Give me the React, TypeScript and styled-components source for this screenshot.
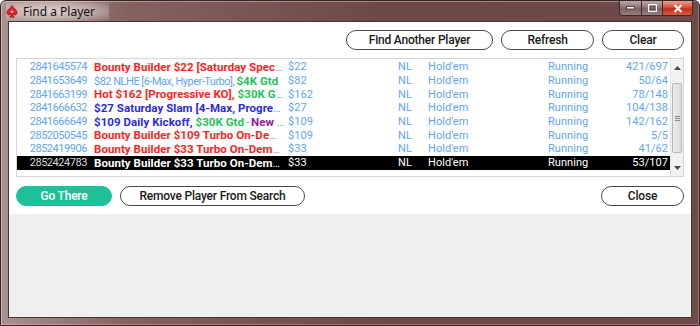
import styled, { createGlobalStyle } from "styled-components";

const GlobalStyle = createGlobalStyle`
  html, body {
    margin: 0;
    padding: 0;
    background: #ffffff;
  }
  * {
    box-sizing: border-box;
  }
`;

const Window = styled.div`
  width: 700px;
  height: 326px;
  display: flex;
  flex-direction: column;
  padding: 0 7px 7px 7px;
  border: 1px solid #3a2423;
  border-radius: 6px 6px 0 0;
  background: linear-gradient(to right, #a89190 0%, #85625f 18%, #6c4846 55%, #6e4a48 100%);
  box-shadow: inset 1px 1px 0 rgba(255, 255, 255, 0.35), inset -1px -1px 0 rgba(255, 255, 255, 0.25);
  font-family: Roboto, "Liberation Sans", sans-serif;
`;

const TitleBar = styled.div`
  height: 20px;
  display: flex;
  align-items: flex-start;
  flex-shrink: 0;
`;

const TitleLabel = styled.div`
  display: flex;
  align-items: center;
  gap: 5px;
  height: 20px;
  margin-left: -2px;
  padding: 0 14px 0 0;
  font-family: "Noto Sans", "Liberation Sans", sans-serif;
  font-size: 12px;
  color: #111;
  background: radial-gradient(ellipse at 45% 50%, rgba(238, 228, 227, 0.8) 0%, rgba(238, 228, 227, 0.45) 55%, rgba(238, 228, 227, 0) 100%);
`;

const WindowControls = styled.div`
  margin-left: auto;
  margin-right: -1px;
  display: flex;
  height: 15px;
  border: 1px solid #3b2a2a;
  border-top: none;
  border-radius: 0 0 4px 4px;
  overflow: hidden;
`;

const ControlButton = styled.div<{ $w: number; $close?: boolean }>`
  width: ${(p) => p.$w}px;
  display: flex;
  align-items: center;
  justify-content: center;
  background: ${(p) =>
    p.$close
      ? "linear-gradient(#e8a18f, #d2533c 45%, #c0321c 55%, #d45a3f)"
      : "linear-gradient(#b9a8a7, #8f7674 45%, #7d6260 55%, #98807e)"};
  & + & {
    border-left: 1px solid #3b2a2a;
  }
`;

const Client = styled.div`
  flex: 1;
  display: flex;
  flex-direction: column;
  background: #efefef;
  border: 1px solid #4a3433;
`;

const Upper = styled.div`
  background: #ffffff;
  padding: 8px 7px 8px 7px;
  display: flex;
  flex-direction: column;
`;

const ButtonRow = styled.div<{ $split?: boolean }>`
  display: flex;
  gap: 8px;
  justify-content: ${(p) => (p.$split ? "flex-start" : "flex-end")};
`;

const PillButton = styled.button<{ $w: number; $primary?: boolean }>`
  width: ${(p) => p.$w}px;
  height: 20px;
  padding: 0;
  border-radius: 10px;
  border: 1px solid ${(p) => (p.$primary ? "#1fbf9a" : "#4a4a4a")};
  background: ${(p) => (p.$primary ? "#1fbf9a" : "#ffffff")};
  color: ${(p) => (p.$primary ? "#ffffff" : "#1a1a1a")};
  font-family: Roboto, "Liberation Sans", sans-serif;
  font-size: 12px;
  font-weight: 500;
  letter-spacing: -0.2px;
`;

const Spacer = styled.div`
  flex: 1;
`;

const ListBox = styled.div`
  margin: 8px 0 9px 0;
  height: 119px;
  border: 1px solid #d6d6d6;
  display: flex;
`;

const Rows = styled.div`
  flex: 1;
  display: flex;
  flex-direction: column;
  padding-top: 1px;
`;

const Row = styled.div<{ $selected?: boolean }>`
  display: grid;
  grid-template-columns: 70px 201px 110px 30px 120px 73px 47px;
  height: 13.7px;
  align-items: center;
  font-size: 11px;
  letter-spacing: 0.05px;
  white-space: nowrap;
  background: ${(p) => (p.$selected ? "#000000" : "transparent")};
  color: ${(p) => (p.$selected ? "#ffffff" : "#62a6f2")};
`;

const IdCell = styled.div<{ $selected?: boolean }>`
  text-align: right;
  letter-spacing: -0.45px;
  color: ${(p) => (p.$selected ? "#d8d8d8" : "#62a6f2")};
`;

const NameCell = styled.div`
  padding: 0 3px 0 7px;
  overflow: hidden;
  text-overflow: ellipsis;
`;

const Cell = styled.div<{ $right?: boolean }>`
  text-align: ${(p) => (p.$right ? "right" : "left")};
`;

const tones = {
  red: "#ff2424",
  green: "#22c45a",
  blue: "#2a2ae6",
  purple: "#8c20a0",
  light: "#62a6f2",
  grey: "#9a9a9a",
};

type Tone = keyof typeof tones;

const isPlain = (t: Tone) => t === "light" || t === "grey";

const Part = styled.span<{ $tone: Tone; $selected?: boolean }>`
  color: ${(p) => (p.$selected ? "#ffffff" : tones[p.$tone])};
  font-weight: ${(p) => (isPlain(p.$tone) ? 400 : 700)};
  font-size: ${(p) => (isPlain(p.$tone) ? "11px" : "11.5px")};
  letter-spacing: ${(p) => (isPlain(p.$tone) ? "-0.5px" : "0.05px")};
`;

const ScrollBar = styled.div`
  width: 13px;
  display: flex;
  flex-direction: column;
  background: #f2f2f2;
  border-left: 1px solid #e6e6e6;
`;

const Arrow = styled.div`
  height: 17px;
  display: flex;
  align-items: center;
  justify-content: center;
`;

const Track = styled.div`
  flex: 1;
  display: flex;
  flex-direction: column;
  padding: 7px 1px 0 1px;
`;

const Thumb = styled.div`
  height: 70px;
  border: 1px solid #b8b8b8;
  border-radius: 2px;
  background: linear-gradient(to right, #ececec, #dcdcdc);
  display: flex;
  align-items: center;
  justify-content: center;
`;

const Grip = styled.div`
  width: 5px;
  height: 5px;
  background: repeating-linear-gradient(#8a8a8a 0 1px, transparent 1px 2px);
`;

type RowData = {
  id: string;
  name: [Tone, string][];
  buy: string;
  count: string;
  selected?: boolean;
};

const rows: RowData[] = [
  { id: "2841645574", name: [["red", "Bounty Builder $22 [Saturday Special]"]], buy: "$22", count: "421/697" },
  { id: "2841653649", name: [["light", "$82 NLHE [6-Max, Hyper-Turbo], "], ["green", "$4K Gtd"]], buy: "$82", count: "50/64" },
  { id: "2841663199", name: [["red", "Hot $162 [Progressive KO], "], ["green", "$30K Gtd"]], buy: "$162", count: "78/148" },
  { id: "2841666632", name: [["blue", "$27 Saturday Slam [4-Max, Progressive KO]"]], buy: "$27", count: "104/138" },
  {
    id: "2841666649",
    name: [["blue", "$109 Daily Kickoff, "], ["green", "$30K Gtd"], ["grey", " - "], ["purple", "New Time"]],
    buy: "$109",
    count: "142/162",
  },
  { id: "2852050545", name: [["red", "Bounty Builder $109 Turbo On-Demand"]], buy: "$109", count: "5/5" },
  { id: "2852419906", name: [["red", "Bounty Builder $33 Turbo On-Demand"]], buy: "$33", count: "41/62" },
  { id: "2852424783", name: [["red", "Bounty Builder $33 Turbo On-Demand"]], buy: "$33", count: "53/107", selected: true },
];

function SpadeIcon() {
  return (
    <svg width="12" height="13" viewBox="0 0 12 13">
      <path
        d="M6 0.5 C4.5 3 0.8 4.8 0.8 7.6 C0.8 9.4 2.4 10.4 3.9 9.9 C4.6 9.7 5.1 9.2 5.3 8.7 C5.2 10 4.6 11.3 3.6 12.3 L8.4 12.3 C7.4 11.3 6.8 10 6.7 8.7 C6.9 9.2 7.4 9.7 8.1 9.9 C9.6 10.4 11.2 9.4 11.2 7.6 C11.2 4.8 7.5 3 6 0.5 Z"
        fill="#e01f1f"
        stroke="#8a1010"
        strokeWidth="0.5"
      />
      <path d="M6 4.2 L6.6 5.9 L8.3 5.9 L6.9 6.9 L7.4 8.5 L6 7.5 L4.6 8.5 L5.1 6.9 L3.7 5.9 L5.4 5.9 Z" fill="#ffd9d9" opacity="0.8" />
    </svg>
  );
}

export default function App() {
  return (
    <>
      <GlobalStyle />
      <Window>
        <TitleBar>
          <TitleLabel>
            <SpadeIcon />
            Find a Player
          </TitleLabel>
          <WindowControls>
            <ControlButton $w={21}>
              <svg width="9" height="4" viewBox="0 0 9 4">
                <rect x="0.5" y="0.5" width="8" height="2.5" fill="#fff" stroke="#333" strokeWidth="0.8" />
              </svg>
            </ControlButton>
            <ControlButton $w={21}>
              <svg width="9" height="8" viewBox="0 0 9 8">
                <rect x="0.5" y="0.5" width="8" height="7" fill="none" stroke="#fff" strokeWidth="1.2" />
                <rect x="2.3" y="2.5" width="4.4" height="3.2" fill="none" stroke="#555" strokeWidth="0.8" />
              </svg>
            </ControlButton>
            <ControlButton $w={30} $close>
              <svg width="10" height="9" viewBox="0 0 10 9">
                <path d="M1.5 1 L8.5 8 M8.5 1 L1.5 8" stroke="#fff" strokeWidth="2" />
              </svg>
            </ControlButton>
          </WindowControls>
        </TitleBar>
        <Client>
          <Upper>
            <ButtonRow>
              <PillButton $w={147}>Find Another Player</PillButton>
              <PillButton $w={93}>Refresh</PillButton>
              <PillButton $w={82}>Clear</PillButton>
            </ButtonRow>
            <ListBox>
              <Rows>
                {rows.map((r) => (
                  <Row key={r.id} $selected={r.selected}>
                    <IdCell $selected={r.selected}>{r.id}</IdCell>
                    <NameCell>
                      {r.name.map(([tone, text], i) => (
                        <Part key={i} $tone={tone} $selected={r.selected}>
                          {text}
                        </Part>
                      ))}
                    </NameCell>
                    <Cell>{r.buy}</Cell>
                    <Cell>NL</Cell>
                    <Cell>Hold'em</Cell>
                    <Cell>Running</Cell>
                    <Cell $right>{r.count}</Cell>
                  </Row>
                ))}
              </Rows>
              <ScrollBar>
                <Arrow>
                  <svg width="7" height="4" viewBox="0 0 7 4">
                    <path d="M0 4 L3.5 0 L7 4 Z" fill="#4a4a4a" />
                  </svg>
                </Arrow>
                <Track>
                  <Thumb>
                    <Grip />
                  </Thumb>
                  <Spacer />
                </Track>
                <Arrow>
                  <svg width="7" height="4" viewBox="0 0 7 4">
                    <path d="M0 0 L3.5 4 L7 0 Z" fill="#4a4a4a" />
                  </svg>
                </Arrow>
              </ScrollBar>
            </ListBox>
            <ButtonRow $split>
              <PillButton $w={96} $primary>
                Go There
              </PillButton>
              <PillButton $w={185}>Remove Player From Search</PillButton>
              <Spacer />
              <PillButton $w={83}>Close</PillButton>
            </ButtonRow>
          </Upper>
        </Client>
      </Window>
    </>
  );
}
